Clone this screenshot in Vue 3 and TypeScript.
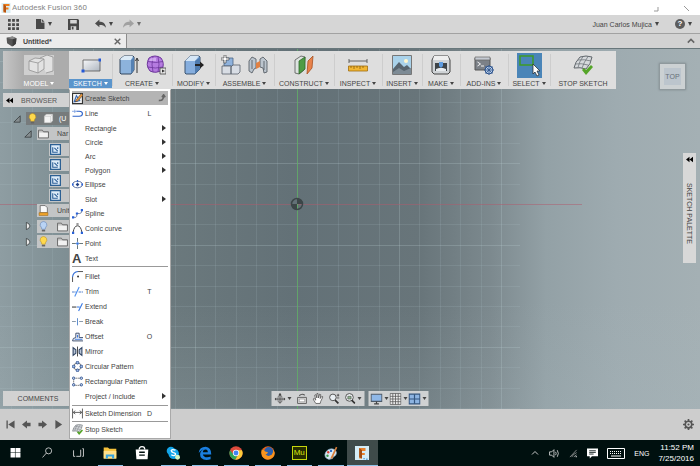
<script setup lang="ts">
interface Tool {
  label: string
  icons: string[]
  arrow: boolean
  state?: string
}

interface MenuItem {
  label: string
  icon?: string
  key?: string
  sub?: boolean
  active?: boolean
}

interface TreeRow {
  level: number
  icons: string[]
  toggle?: string
  text?: string
  root?: boolean
}

const icons: Record<string, string> = {
  // title and quick access
  fusion: '<path d="M1 0h18v20H1z" fill="#d9edf3"/><path d="M5 2h12v4H10v3h5v4h-5v6H5z" fill="#ef7d1a"/><path d="M5 2l5 4v13l-5-2z" fill="#b65312"/>',
  apps: '<g fill="#484848"><path d="M0 0h5v5H0zM7.500 0h5v5h-5zM15 0h5v5h-5zM0 7.500h5v5H0zM7.500 7.500h5v5h-5zM15 7.500h5v5h-5zM0 15h5v5H0zM7.500 15h5v5h-5zM15 15h5v5h-5z"/></g>',
  file: '<path d="M2 0h10v7h7v13H2z" fill="#484848"/><path d="M13.500 0L19 5.500h-5.500z" fill="#484848"/>',
  save: '<path d="M0 0h18l2 2v18H0z" fill="#484848"/><path d="M4 2h12v6H4zM5 13h10v7H5z" fill="#d6d6d6"/><path d="M7 14h3v5H7z" fill="#484848"/>',
  undo: '<path d="M0 8l8-7v4c7 0 11 3 12 11-3-4-6-5-12-5v4z" fill="#4c4c4c"/>',
  redo: '<path d="M20 8l-8-7v4C5 5 1 8 0 16c3-4 6-5 12-5v4z" fill="#8b8b8b"/>',
  cube: '<path d="M1 3l11-2 7 3-1 10-7 5-9-6z" fill="#555"/><path d="M1 3l11 3 7-2-7-3z" fill="#8a8a8a"/><path d="M12 6v13l6-5 1-10z" fill="#3c3c3c"/>',
  // ribbon
  model: '<path d="M0 0h30v20H0z" fill="#cfcfcf"/><g fill="#e2e2e2" stroke="#929292" stroke-width=".8"><path d="M16 3l7-3 6 2v14l-7 2"/><path d="M5 6l6-3 9 1v10l-6 4-9-3z"/><path d="M5 6l9 2 6-4M14 8v10" fill="none"/></g>',
  rect: '<defs><linearGradient id="rg" x2="1" y2="1"><stop stop-color="#f6f7f9"/><stop offset="1" stop-color="#aeb6c0"/></linearGradient></defs><path d="M2 5h17v11H2z" fill="url(#rg)" stroke="#555" stroke-width=".8"/><path d="M17.500 3.500h3v3h-3zM.500 14.500h3v3h-3z" fill="#2358d8"/>',
  extrude: '<path d="M1 4l4-3h9l1 1v13l-3 4H2l-1-1z" fill="#8db3dc" stroke="#33475e"/><path d="M1 4l4-3h9l-2 4H2z" fill="#dcebf7"/><path d="M12 5l3-3v13l-3 4z" fill="#5581b3"/><path d="M18 18V4M16.500 6L18 3l1.500 3" fill="none" stroke="#333"/>',
  form: '<path d="M3 3q6-4 12 0 4 5 1 12-6 4-12 1-5-6-1-13z" fill="#b57be0" stroke="#6d369c"/><path d="M7 1.500q-2 8 0 15.500M12 1.500q2 8 0 15.500M2 6.500q8 2 15 0M1.500 12q8 2 15.500 0" fill="none" stroke="#6d369c" stroke-width=".8"/><path d="M4 4q3-2 6-1v3H3z" fill="#dcbcf5" opacity=".7"/><path d="M14 13h6v6h-6z" fill="#e4e4e4" stroke="#444" stroke-width=".8"/><path d="M16 14.500l3 1.500-3 1.500z" fill="#333"/>',
  modify: '<path d="M1 6l5-5h9l1 1v12l-5 5H2l-1-1z" fill="#86aede" stroke="#3a536f"/><path d="M1 6l5-5h9l-4 5z" fill="#d5e6f6"/><path d="M11 6l5-4v12l-5 5z" fill="#4f7cb0"/><path d="M11 9h5V6.500l4 3.500-4 3.500V11h-5z" fill="#222"/>',
  component: '<path d="M3 5l2-2h7v8H3z" fill="#8fb2dc" stroke="#4d6484" stroke-width=".8"/><g fill="#d8dde4" stroke="#59606a" stroke-width=".8"><path d="M1 11h9v8H1zM10 12l2-2h7v7l-2 2h-7z"/></g><path d="M3 0h2v3h3v2H5v3H3V5H0V3h3z" fill="#fff" stroke="#333" stroke-width=".6"/>',
  joint: '<g fill="#bcc5ce" stroke="#4d545c" stroke-width=".8"><path d="M1 6l3-4 4 2v9l-2 1-2 4-3-2zM12 4l3-2 4 4v11l-3 1-1-5-3-1z"/><path d="M4 5v9M16 6v9" fill="none"/></g><path d="M8 8l4-2v6l-4 2z" fill="#e08042"/>',
  plane: '<path d="M1 5l6-4 4 1-1 13-5 4-4-1z" fill="#dde3e0" stroke="#555" stroke-width=".8"/><path d="M5 6l6-4v12l-6 5z" fill="#4f9c45" stroke="#2f6a2a" stroke-width=".8"/><path d="M14 6l5-5-1 12-5 6z" fill="#e8824b" stroke="#a7501f" stroke-width=".8"/>',
  ruler: '<path d="M1 6h18M1 4v4M19 4v4" stroke="#555" fill="none" stroke-width=".9"/><path d="M.500 11h19v5H.500z" fill="#f2b632" stroke="#a06d10" stroke-width=".8"/><path d="M3 11v2M6 11v3M9 11v2M12 11v3M15 11v2" stroke="#7c5307" stroke-width=".7"/>',
  image: '<path d="M.500.500h19v19H.500z" fill="#a9d2ea" stroke="#777"/><circle cx="14" cy="6" r="2" fill="#fff7ce"/><path d="M1 14l6-7 5 5 3-2 4 4v5H1z" fill="#57646e"/><path d="M1 17l6-4 5 3 7-3v6H1z" fill="#7d8b95"/>',
  printer: '<path d="M3 1h14l2 4v12l-2 2H3l-2-2V5z" fill="#cfd3d6" stroke="#444"/><path d="M4 8h12v8H4z" fill="#3e4449"/><path d="M3 1h14l1 4H2z" fill="#eee"/><path d="M8 7h4v4l-2 2-2-2z" fill="#5d9be0"/><path d="M5 14l3-1h4l3 1v2H5z" fill="#e7ebee"/>',
  script: '<path d="M1 3h15v12H1z" fill="#7c8188" stroke="#555"/><path d="M1 2h15v3H1z" fill="#c5cad2" stroke="#666" stroke-width=".7"/><path d="M3.500 7l3 2-3 2M7 11h3" fill="none" stroke="#fff" stroke-width=".9"/><circle cx="15" cy="15" r="4" fill="#b8cde9" stroke="#2d538c"/><path d="M15 10v10M10 15h10M11.500 11.500l7 7M18.500 11.500l-7 7" stroke="#2d538c" stroke-width=".8"/>',
  select: '<path d="M0 0h25v25H0z" fill="#4a85b8"/><path d="M3 3h13v9H3z" fill="none" stroke="#3f9a26" stroke-width="1.500"/><path d="M16 11l7 7h-3l2 4-2 1-2-4-2 2z" fill="#fff" stroke="#222" stroke-width=".7"/>',
  finish: '<path d="M7 2q6-2 12 0-1 7-6 12-6-2-12-1 1-6 6-11z" fill="#d6d9dc" stroke="#60666b"/><path d="M10 1.500Q6 7 5 12.500M15 1.500Q11 7 9 13M5 5q6-1 13 1M2 9q6-1 13 1" fill="none" stroke="#70767b" stroke-width=".8"/><path d="M9 15l2-2 2 2 5-5 2 2-7 8z" fill="#55a528"/>',
  // menu
  pencilbox: '<path d="M1 1h18v18H1z" fill="#f3f3f3" stroke="#333" stroke-width="2"/><path d="M4 16L8 5l6 9z" fill="none" stroke="#3569b8" stroke-width="2"/><path d="M7 13L17 1l3 3-10 11-4 1z" fill="#e9963a" stroke="#333"/>',
  line: '<path d="M1 15h12q6 0 6-4.500T13 6H8" fill="none" stroke="#2d62c9" stroke-width="2"/><path d="M0 6h8M5 3v6" stroke="#7a9ee0" stroke-width="1.500"/>',
  ellipse: '<ellipse cx="10" cy="10" rx="9" ry="6" fill="none" stroke="#5a6f9f" stroke-width="1.800"/><path d="M10 2v3M10 7v6M7 10h6" stroke="#2358c8" stroke-width="2"/><circle cx="10" cy="10" r="2.500" fill="#27417b"/><path d="M0 8h3v4H0zM17 8h3v4h-3z" fill="#2861d8"/>',
  spline: '<path d="M2 17h5q2 0 2-7h5q4 0 4-6" fill="none" stroke="#66799e" stroke-width="1.600"/><path d="M0 15h4v4H0zM16 2h4v4h-4zM7 8h4v4H7z" fill="#2861d8"/>',
  conic: '<path d="M2 17Q4 5 10 5t8 12" fill="none" stroke="#444" stroke-width="1.800"/><path d="M8 0h4v4H8z" fill="#999"/><path d="M0 16h4v4H0zM16 16h4v4h-4z" fill="#2861d8"/>',
  point: '<path d="M0 10h7M13 10h7M10 0v7M10 13v7" stroke="#566" stroke-width="1.600"/><circle cx="10" cy="10" r="2.500" fill="#3a78e0"/>',
  fillet: '<path d="M1 11Q2 2 11 1" fill="none" stroke="#2f6bd6" stroke-width="2"/><path d="M11 1h9M1 11v9" stroke="#555" stroke-width="1.800"/><circle cx="11" cy="10" r="1.800" fill="#333"/>',
  trim: '<path d="M0 11h8M12 11h8" stroke="#5684cf" stroke-width="2" stroke-dasharray="5 1"/><path d="M5 19L13 2" stroke="#4c8ff0" stroke-width="2"/>',
  extend: '<path d="M0 11h8" stroke="#444" stroke-width="2"/><path d="M9 11h5M12 18L19 4" stroke="#3778e2" stroke-width="2"/>',
  break: '<path d="M0 10h7M13 10h7" stroke="#8b9bab" stroke-width="1.800"/><path d="M10 4v13" stroke="#5d8ece" stroke-width="1.800"/>',
  offset: '<path d="M7 12V4h6v8h7M7 12q-6 0-6 6h19" fill="none" stroke="#405070" stroke-width="1.800"/><path d="M5 15h14M10 7v5" stroke="#3a76da" stroke-width="1.800"/>',
  mirror: '<path d="M2 3v14l5-4V7zM18 3v14l-5-4V7z" fill="#bac6d7" stroke="#334766" stroke-width="2"/><path d="M10 1v18" stroke="#333" stroke-width="1.600"/>',
  circpat: '<circle cx="10" cy="10" r="6.500" fill="none" stroke="#666" stroke-width="1.500"/><g fill="#9fb9e6" stroke="#244a8c" stroke-width="1.500"><circle cx="10" cy="3" r="2.500"/><circle cx="3" cy="10" r="2.500"/><circle cx="17" cy="10" r="2.500"/><circle cx="10" cy="17" r="2.500"/></g>',
  rectpat: '<path d="M3 4h14M3 4v13h14" fill="none" stroke="#666" stroke-width="1.500" stroke-dasharray="3 1"/><g fill="#cddaf0" stroke="#244a8c" stroke-width="1.500"><circle cx="3" cy="4" r="2.200"/><circle cx="17" cy="4" r="2.200"/><circle cx="3" cy="16" r="2.200"/><circle cx="17" cy="16" r="2.200"/></g>',
  dimension: '<path d="M1 1v18M19 1v18M3 8h14M6 5L2 8l4 3M14 5l4 3-4 3" fill="none" stroke="#444" stroke-width="1.500"/>',
  // browser
  bulb: '<path d="M10 1a6 6 0 0 1 4 10.500L13 15H7l-1-3.500A6 6 0 0 1 10 1z" fill="#ffd94d" stroke="#b98d17"/><path d="M7 16h6v3H7z" fill="#666"/>',
  bulboff: '<path d="M10 1a6 6 0 0 1 4 10.500L13 15H7l-1-3.500A6 6 0 0 1 10 1z" fill="#b9d3f5" stroke="#5c7db2"/><path d="M7 16h6v3H7z" fill="#666"/>',
  body: '<path d="M2 6l4-4h12v12l-4 4H2z" fill="#f4f4f4" stroke="#8a8a8a"/><path d="M2 6h12v12M14 6l4-4" fill="none" stroke="#bbb"/>',
  folder: '<path d="M1 4h7l2 3h9v11H1z" fill="#f1f1f1" stroke="#555" stroke-width="1.500"/><path d="M1 7h18" stroke="#777"/>',
  view: '<path d="M1 1h18v18H1z" fill="#dcebf8" stroke="#2c6093" stroke-width="2.500"/><path d="M5 6v9h9M8 7l6 6M14 6v3" fill="none" stroke="#2c5f97" stroke-width="2"/>',
  units: '<path d="M4 1h9l4 4v9H4z" fill="#fafafa" stroke="#666" stroke-width="1.500"/><path d="M2 14h16v5H2z" fill="#f0a52c" stroke="#9d6410"/>',
  open: '<path d="M18 2v16H2z" fill="#858d90" stroke="#2f3335" stroke-width="1.800"/>',
  shut: '<path d="M6 1q8 3 9 9-1 6-9 9z" fill="#e8e8e8" stroke="#2f3335" stroke-width="1.800"/>',
  // navigation
  orbit: '<path d="M10 1v18M1 11h18" stroke="#444" stroke-width="1.600"/><ellipse cx="10" cy="11" rx="4" ry="7" fill="none" stroke="#555" stroke-width="1.300"/><path d="M7 4l3-4 3 4zM17 8l3 3-3 3zM3 8l-3 3 3 3z" fill="#444"/>',
  look: '<path d="M2 8h16v11H2z" fill="#ddd" stroke="#555" stroke-width="1.600"/><path d="M5 11h10v5H5z" fill="#fff" stroke="#777"/><path d="M5 5q5-5 10-1" fill="none" stroke="#555" stroke-width="2"/>',
  hand: '<path d="M6 19L1 11l2-1 3 3-2-9 2-1 2 6V1h2l1 8 2-7 2 1-1 7 3-4 2 1-4 8-1 4z" fill="#fff" stroke="#444" stroke-width="1.300"/>',
  zoomer: '<circle cx="8" cy="8" r="6" fill="#e9eff3" stroke="#555" stroke-width="1.800"/><path d="M12 13l6 6" stroke="#333" stroke-width="3"/><path d="M15 4h5M17.500 1.500v5M15 9h5" stroke="#333" stroke-width="1.300"/>',
  fit: '<circle cx="9" cy="8" r="7" fill="#eef2f4" stroke="#555" stroke-width="1.800"/><path d="M6 6h6v5H6z" fill="#8db58d" stroke="#444"/><path d="M13 13l6 6" stroke="#333" stroke-width="3"/>',
  monitor: '<path d="M1 2h18v12H1z" fill="#8fb8e8" stroke="#4d5a68" stroke-width="1.800"/><path d="M6 18h8M10 14v4" stroke="#444" stroke-width="2"/>',
  grid: '<path d="M1 1h18v18H1z" fill="#f2f2f2"/><path d="M1 1h18v18H1zM5.500 1v18M10 1v18M14.500 1v18M1 5.500h18M1 10h18M1 14.500h18" fill="none" stroke="#555" stroke-width="1.300"/>',
  panes: '<path d="M1 2h18v16H1z" fill="#8db4e2" stroke="#33557f" stroke-width="2"/><path d="M10 2v16M1 10h18" stroke="#33557f" stroke-width="2"/>',
  // timeline
  first: '<path d="M1 1h3v18H1zM19 1v18L5 10z" fill="#555"/>',
  prev: '<path d="M0 10L11 1v5h8v8h-8v5z" fill="#555"/>',
  next: '<path d="M20 10L9 1v5H1v8h8v5z" fill="#555"/>',
  play: '<path d="M3 0v20l15-10z" fill="#555"/>',
  gear: '<circle cx="10" cy="10" r="6" fill="none" stroke="#555" stroke-width="3"/><circle cx="10" cy="10" r="2" fill="#555"/><path d="M10 0v4M10 16v4M0 10h4M16 10h4M3 3l3 3M14 14l3 3M17 3l-3 3M6 14l-3 3" stroke="#555" stroke-width="3"/>',
  // taskbar
  windows: '<path d="M1 2h8v8H1zM10 2h9v8h-9zM1 11h8v8H1zM10 11h9v8h-9z" fill="#fff"/>',
  search: '<circle cx="12" cy="7" r="5.500" fill="none" stroke="#ddd" stroke-width="1.500"/><path d="M8 11l-7 8" stroke="#ddd" stroke-width="1.500"/>',
  taskview: '<path d="M1 6v11h3M6 17h8V5M17 3h2v14h-2" fill="none" stroke="#ddd" stroke-width="1.600"/>',
  explorer: '<path d="M1 2h6l2 2h10v14H1z" fill="#f5c33c"/><path d="M1 7h18v11H1z" fill="#ffe08a"/><path d="M4 12h12v6h-3v-3H7v3H4z" fill="#35a3e0"/>',
  store: '<path d="M6 5q0-4 4-4t4 4" fill="none" stroke="#fff" stroke-width="1.800"/><path d="M1 5h18l-1 14H2z" fill="#fff"/><path d="M6 8h8v2H6zM6 12h8v2H6z" fill="#00100f"/>',
  skype: '<circle cx="7" cy="7" r="6" fill="#12a5e8"/><circle cx="11" cy="11" r="7.500" fill="#12a5e8"/><path d="M13.500 6q-5-2-6 .500 0 2 3 3 4 1 3 3-2 2.500-6 0" fill="none" stroke="#fff" stroke-width="2"/><circle cx="16.500" cy="16" r="3.500" fill="#d7f5c2"/>',
  edge: '<path d="M1 10Q2 1 11 1q8 1 8 11H7q1 4 6 4 3 0 5-1v4q-3 1-6 1-9-1-9-8 0-5 5-7-3 0-7 5zM7 9h7q0-4-3-4-4 0-4 4z" fill="#1a7fe0"/>',
  chrome: '<circle cx="10" cy="10" r="9.500" fill="#dd4b3c"/><path d="M1.500 6A9.500 9.500 0 0 0 9 19.500L13 12l-6 1z" fill="#2ea65a"/><path d="M9 19.500A9.500 9.500 0 0 0 18.500 6H10l3.500 6z" fill="#fccd3a"/><circle cx="10" cy="10" r="4.500" fill="#fff"/><circle cx="10" cy="10" r="3.500" fill="#4285f4"/>',
  firefox: '<circle cx="10" cy="10" r="9.500" fill="#e8641b"/><circle cx="11" cy="8" r="6.500" fill="#2a5fae"/><path d="M1 5q3 0 5 3l4 1q-2 4-4 2 3 5 9 2 3-3 2-8 5 6 0 11-7 6-13 1-5-4-3-12z" fill="#f7941e"/>',
  paint: '<path d="M3 8q5-6 12-3 5 4 1 9-3 1-4 4-6 3-10-2-2-4 1-8z" fill="#dcebf5" stroke="#7fa4be"/><circle cx="6" cy="9" r="1.700" fill="#d9423a"/><circle cx="5" cy="14" r="1.700" fill="#3b9b4c"/><circle cx="10" cy="7" r="1.700" fill="#3271c6"/><path d="M9 18l8-17 2 1-7 16z" fill="#d87f3b"/>',
  fusiontask: '<path d="M0 0h20v20H0z" fill="#d5edf6"/><path d="M6 3h9v4h-5v3h4v3h-4v5H6z" fill="#e8822e"/><path d="M6 3l4 3v12l-4-2z" fill="#a14d13"/><path d="M12 17h2v2h-2zM16 18h2v2h-2z" fill="#4fa1dc"/>',
  up: '<path d="M4 13l6-6 6 6" fill="none" stroke="#ddd" stroke-width="1.800"/>',
  sound: '<path d="M1 7h4l4-4v14l-4-4H1z" fill="none" stroke="#ddd" stroke-width="1.500"/><path d="M12 7q2 3 0 6M15 4q4 6 0 12" fill="none" stroke="#ddd" stroke-width="1.500"/>',
  wifi: '<path d="M2 18L17 2M6 18q2-6 11-10M11 18q1-3 6-5" fill="none" stroke="#bbb" stroke-width="1.500"/><circle cx="16" cy="17" r="1.500" fill="#eee"/>',
  note: '<path d="M0 1h20v14H9l-4 4v-4H0z" fill="#fff"/><path d="M4 5h12M4 8h12M4 11h8" stroke="#00100f" stroke-width="1.500"/>',
}

const tools: Tool[] = [
  { label: 'MODEL', icons: ['model'], arrow: true, state: 'workspace' },
  { label: 'SKETCH', icons: ['rect'], arrow: true, state: 'opened' },
  { label: 'CREATE', icons: ['extrude', 'form'], arrow: true },
  { label: 'MODIFY', icons: ['modify'], arrow: true },
  { label: 'ASSEMBLE', icons: ['component', 'joint'], arrow: true },
  { label: 'CONSTRUCT', icons: ['plane'], arrow: true },
  { label: 'INSPECT', icons: ['ruler'], arrow: true },
  { label: 'INSERT', icons: ['image'], arrow: true },
  { label: 'MAKE', icons: ['printer'], arrow: true },
  { label: 'ADD-INS', icons: ['script'], arrow: true },
  { label: 'SELECT', icons: ['select'], arrow: true },
  { label: 'STOP SKETCH', icons: ['finish'], arrow: false },
]

const menu: MenuItem[][] = [
  [{ label: 'Create Sketch', icon: 'pencilbox', active: true }],
  [
    { label: 'Line', icon: 'line', key: 'L' },
    { label: 'Rectangle', sub: true },
    { label: 'Circle', sub: true },
    { label: 'Arc', sub: true },
    { label: 'Polygon', sub: true },
    { label: 'Ellipse', icon: 'ellipse' },
    { label: 'Slot', sub: true },
    { label: 'Spline', icon: 'spline' },
    { label: 'Conic curve', icon: 'conic' },
    { label: 'Point', icon: 'point' },
    { label: 'Text', icon: 'letter' },
  ],
  [
    { label: 'Fillet', icon: 'fillet' },
    { label: 'Trim', icon: 'trim', key: 'T' },
    { label: 'Extend', icon: 'extend' },
    { label: 'Break', icon: 'break' },
    { label: 'Offset', icon: 'offset', key: 'O' },
    { label: 'Mirror', icon: 'mirror' },
    { label: 'Circular Pattern', icon: 'circpat' },
    { label: 'Rectangular Pattern', icon: 'rectpat' },
    { label: 'Project / Include', sub: true },
  ],
  [{ label: 'Sketch Dimension', icon: 'dimension', key: 'D' }],
  [{ label: 'Stop Sketch', icon: 'finish' }],
]

const tree: TreeRow[] = [
  { level: 1, toggle: 'open', icons: ['bulb', 'body'], text: '(U', root: true },
  { level: 2, toggle: 'open', icons: ['folder'], text: 'Nar' },
  { level: 3, icons: ['view'] },
  { level: 3, icons: ['view'] },
  { level: 3, icons: ['view'] },
  { level: 3, icons: ['view'] },
  { level: 2, icons: ['units'], text: 'Unit' },
  { level: 2, toggle: 'shut', icons: ['bulboff', 'folder'] },
  { level: 2, toggle: 'shut', icons: ['bulb', 'folder'] },
]

const navView = [
  { icon: 'orbit', arrow: true },
  { icon: 'look', arrow: false },
  { icon: 'hand', arrow: false },
  { icon: 'zoomer', arrow: false },
  { icon: 'fit', arrow: true },
]
const navDisplay = ['monitor', 'grid', 'panes']
const playback = ['first', 'prev', 'next', 'play']

const taskApps = [
  { icon: 'windows', open: false },
  { icon: 'search', open: false },
  { icon: 'taskview', open: false },
  { icon: 'explorer', open: true },
  { icon: 'store', open: false },
  { icon: 'skype', open: true },
  { icon: 'edge', open: true },
  { icon: 'chrome', open: true },
  { icon: 'firefox', open: true },
  { icon: 'muse', open: true },
  { icon: 'paint', open: true },
  { icon: 'fusiontask', open: true },
]

// Sketch grid, measured from the origin marker
const origin = { x: 297, y: 155 }
const step = 20.4
const columns = Array.from({ length: 25 }, (_, i) => i - 14)
  .filter((n) => n !== 0)
  .map((n) => ({ pos: Math.round(origin.x + n * step) + 0.5, major: n % 5 === 0 }))
const rows = Array.from({ length: 40 }, (_, i) => i - 7)
  .filter((n) => n !== 0)
  .map((n) => ({ pos: Math.round(origin.y + n * step) + 0.5, major: Math.abs(n % 5) === 2 }))
</script>

<template>
  <div class="app">
    <header class="titlebar">
      <svg class="i10" viewBox="0 0 20 20" v-html="icons.fusion"></svg>
      <span class="title">Autodesk Fusion 360</span>
      <svg class="winbuttons" viewBox="0 0 40 10"><path d="M1 8h4V4" /><path d="M31 3l5 5" /></svg>
    </header>

    <div class="quickbar">
      <button class="plain" aria-label="Data panel"><svg class="i11" viewBox="0 0 20 20" v-html="icons.apps"></svg></button>
      <button class="plain" aria-label="File"><svg class="i10" viewBox="0 0 20 20" v-html="icons.file"></svg><i class="caret"></i></button>
      <button class="plain" aria-label="Save"><svg class="i11" viewBox="0 0 20 20" v-html="icons.save"></svg></button>
      <div class="history">
        <button class="plain" aria-label="Undo"><svg class="i11" viewBox="0 0 20 20" v-html="icons.undo"></svg><i class="caret"></i></button>
        <button class="plain faded" aria-label="Redo"><svg class="i11" viewBox="0 0 20 20" v-html="icons.redo"></svg><i class="caret"></i></button>
      </div>
      <button class="plain user">Juan Carlos Mujica<i class="caret"></i></button>
      <button class="plain" aria-label="Help"><span class="help">?</span><i class="caret"></i></button>
    </div>

    <div class="tabs">
      <div class="tab">
        <svg class="i11" viewBox="0 0 20 20" v-html="icons.cube"></svg>
        <span>Untitled*</span>
        <button class="plain" aria-label="Close tab">
          <svg class="i7" viewBox="0 0 10 10"><path class="stroke" d="M1 1l8 8M9 1l-8 8" /></svg>
        </button>
      </div>
      <button class="plain collapse" aria-label="Collapse">
        <svg class="i8" viewBox="0 0 10 10"><path class="stroke" d="M1 7l4-4 4 4" /></svg>
      </button>
    </div>

    <main class="viewport">
      <svg class="canvas">
        <line v-for="c in columns" :key="'c' + c.pos" :x1="c.pos" :x2="c.pos" y1="0" y2="100%" :class="{ major: c.major }" />
        <line v-for="r in rows" :key="'r' + r.pos" x1="0" x2="520" :y1="r.pos" :y2="r.pos" :class="{ major: r.major }" />
        <line class="axis-x" x1="0" x2="582" y1="155.5" y2="155.5" />
        <line class="axis-y" x1="297.5" x2="297.5" y1="0" y2="100%" />
        <circle class="ring" cx="297" cy="155" r="5.500" />
        <path class="wedge" d="M297 155V149.500A5.500 5.500 0 0 1 302.500 155zM297 155v5.500A5.500 5.500 0 0 1 291.500 155z" />
      </svg>

      <nav class="ribbon">
        <div v-for="tool in tools" :key="tool.label" class="group" :class="tool.state">
          <button class="tool">
            <span class="pics">
              <svg
                v-for="name in tool.icons"
                :key="name"
                :class="name"
                :viewBox="name === 'model' ? '0 0 30 20' : name === 'select' ? '0 0 25 25' : '0 0 20 20'"
                v-html="icons[name]"
              ></svg>
            </span>
            <span class="label">{{ tool.label }}<i v-if="tool.arrow" class="caret small"></i></span>
          </button>
          <div v-if="tool.state === 'opened'" class="menu">
            <ul v-for="(section, s) in menu" :key="s">
              <li v-for="item in section" :key="item.label">
                <button class="item" :class="{ active: item.active, sub: item.sub }">
                  <span class="slot">
                    <b v-if="item.icon === 'letter'" class="letter">A</b>
                    <svg v-else-if="item.icon" class="i11" viewBox="0 0 20 20" v-html="icons[item.icon]"></svg>
                  </span>
                  <span class="name">{{ item.label }}</span>
                  <kbd v-if="item.key">{{ item.key }}</kbd>
                  <i v-if="item.sub" class="right"></i>
                  <svg v-if="item.active" class="i8" viewBox="0 0 10 10"><path class="stroke" d="M1 8q6 1 6-6M5 4l2-3 2 3" /></svg>
                </button>
              </li>
            </ul>
          </div>
        </div>
      </nav>

      <section class="browser">
        <h2><svg class="i7" viewBox="0 0 10 8"><path d="M5 0v8L0 4zM10 0v8L5 4z" /></svg>BROWSER</h2>
        <ul class="tree">
          <li v-for="(row, i) in tree" :key="i" :class="['level' + row.level, { root: row.root }]">
            <span class="toggle"><svg v-if="row.toggle" class="i8" viewBox="0 0 20 20" v-html="icons[row.toggle]"></svg></span>
            <span class="node">
              <svg v-for="name in row.icons" :key="name" class="i11" viewBox="0 0 20 20" v-html="icons[name]"></svg>
              <span v-if="row.text">{{ row.text }}</span>
            </span>
          </li>
        </ul>
      </section>

      <div class="viewcube"><span>TOP</span></div>
      <button class="palette">
        <svg class="i7" viewBox="0 0 10 8"><path d="M5 0v8L0 4zM10 0v8L5 4z" /></svg>
        <span>SKETCH PALETTE</span>
      </button>

      <div class="footer">
        <button class="comments">COMMENTS</button>
        <div class="navbar">
          <div class="navset">
            <button v-for="n in navView" :key="n.icon" class="plain" :aria-label="n.icon">
              <svg class="i11" viewBox="0 0 20 20" v-html="icons[n.icon]"></svg><i v-if="n.arrow" class="caret small"></i>
            </button>
          </div>
          <div class="navset display">
            <button v-for="n in navDisplay" :key="n" class="plain" :aria-label="n">
              <svg class="i12" viewBox="0 0 20 20" v-html="icons[n]"></svg><i class="caret small"></i>
            </button>
          </div>
        </div>
      </div>
    </main>

    <div class="timeline">
      <button v-for="p in playback" :key="p" class="plain" :aria-label="p">
        <svg class="i9" viewBox="0 0 20 20" v-html="icons[p]"></svg>
      </button>
      <button class="plain settings" aria-label="Settings"><svg class="i11" viewBox="0 0 20 20" v-html="icons.gear"></svg></button>
    </div>

    <footer class="taskbar">
      <div class="apps">
        <button v-for="a in taskApps" :key="a.icon" :aria-label="a.icon" :class="{ open: a.open, current: a.icon === 'fusiontask' }">
          <span v-if="a.icon === 'muse'" class="muse">Mu</span>
          <svg v-else :class="['windows', 'search', 'taskview'].includes(a.icon) ? 'i11' : 'i14'" viewBox="0 0 20 20" v-html="icons[a.icon]"></svg>
        </button>
      </div>
      <div class="tray">
        <svg class="i10" viewBox="0 0 20 20" v-html="icons.up"></svg>
        <svg class="i11" viewBox="0 0 20 20" v-html="icons.sound"></svg>
        <svg class="i9" viewBox="0 0 20 20" v-html="icons.wifi"></svg>
        <svg class="i11" viewBox="0 0 20 20" v-html="icons.note"></svg>
        <svg class="keyboard" viewBox="0 0 18 11">
          <path class="frame" d="M.500.500h17v10H.500z" />
          <path class="keys" d="M3 3.500h12M3 5.500h12" />
          <path class="frame" d="M4 8h10" />
        </svg>
        <span>ENG</span>
        <time>11:52 PM<br />7/25/2016</time>
      </div>
    </footer>
  </div>
</template>

<style>
body {
  margin: 0;
}
</style>

<style scoped>
.app {
  display: flex;
  flex-direction: column;
  min-height: 100vh;
  font: 7px/9px 'Liberation Sans', Arial, sans-serif;
  color: #444;
  overflow: hidden;
}
button {
  font: inherit;
  color: inherit;
  border: 0;
  margin: 0;
  padding: 0;
  background: none;
}
ul {
  list-style: none;
  margin: 0;
  padding: 0;
}
svg {
  display: block;
  flex: none;
}
.i7 { width: 7px; height: 7px; }
.i8 { width: 8px; height: 8px; }
.i9 { width: 9px; height: 9px; }
.i10 { width: 10px; height: 10px; }
.i11 { width: 11px; height: 11px; }
.i12 { width: 12px; height: 12px; }
.i14 { width: 14px; height: 14px; }
.plain {
  display: flex;
  align-items: center;
  gap: 3px;
}
.stroke {
  fill: none;
  stroke: #666;
  stroke-width: 2;
}
.caret {
  flex: none;
  border: 2px solid transparent;
  border-top: 4px solid #444;
  border-bottom: 0;
}
.caret.small {
  border-top-width: 3px;
}

.titlebar {
  display: flex;
  align-items: center;
  height: 15px;
  padding: 0 7px 0 1px;
  gap: 1px;
  background: #fff;
  color: #888;
}
.title {
  font: 8px/10px Roboto, 'Liberation Sans', sans-serif;
}
.winbuttons {
  width: 40px;
  height: 10px;
  margin-left: auto;
  fill: none;
  stroke: #999;
}
.quickbar {
  display: flex;
  align-items: center;
  gap: 16px;
  height: 18px;
  padding: 0 8px;
  background: #d6d6d6;
  border-bottom: 1px solid #a2a2a2;
}
.history {
  display: flex;
  gap: 10px;
}
.faded {
  opacity: 0.7;
}
.user {
  margin-left: auto;
}
.help {
  width: 10px;
  height: 10px;
  border-radius: 50%;
  background: #5c5c5c;
  color: #fff;
  font: bold 8px/10px 'Liberation Sans', Arial, sans-serif;
}
.tabs {
  display: flex;
  height: 14px;
  background: #d2d2d2;
}
.tab {
  display: flex;
  align-items: center;
  gap: 6px;
  width: 115px;
  padding: 0 5px 0 6px;
  background: #ececec;
  border-right: 1px solid #8c8c8c;
  font-weight: bold;
}
.tab .plain {
  margin-left: auto;
}
.collapse {
  margin-left: auto;
  margin-right: 5px;
}

.viewport {
  position: relative;
  flex: 1;
  display: flex;
  flex-direction: column;
  padding: 2px 3px 3px;
  border-top: 1px solid #68777b;
  background:
    linear-gradient(to bottom, rgba(170, 185, 190, 0) 70%, rgba(170, 185, 190, 0.18)),
    linear-gradient(to right, #8e9da2, #819196 8%, #6b797d 24%, #637177 42%, #68757a 60%, #7c898e 70%, #93a1a6 78%, #9eabb0 88%, #a4b0b4);
}
.canvas {
  position: absolute;
  inset: 0;
  width: 100%;
  height: 100%;
}
.canvas line {
  stroke: #b8cdd2;
  stroke-opacity: 0.14;
}
.canvas line.major {
  stroke-opacity: 0.26;
}
.canvas line.axis-x {
  stroke: #b05a6c;
  stroke-opacity: 0.5;
}
.canvas line.axis-y {
  stroke: #62b066;
  stroke-opacity: 0.8;
}
.ring {
  fill: none;
  stroke: #3c4648;
  stroke-width: 1.5;
}
.wedge {
  fill: #3c4648;
}

.ribbon {
  position: relative;
  z-index: 2;
  display: grid;
  grid-template-columns: 66px 43px 60px 43px 59px 60px 48px 40px 38px 48px 42px 66px;
  align-self: flex-start;
  height: 38px;
  background: #dedede;
}
.group {
  position: relative;
  display: flex;
}
.group + .group + .group::before {
  content: '';
  position: absolute;
  left: 0;
  top: 3px;
  bottom: 3px;
  border-left: 1px solid #cdcdcd;
}
.tool {
  flex: 1;
  display: flex;
  flex-direction: column;
  align-items: center;
}
.pics {
  display: flex;
  align-items: center;
  justify-content: center;
  gap: 7px;
  height: 28px;
}
.pics svg {
  width: 20px;
  height: 20px;
}
.pics .model {
  width: 30px;
}
.pics .select {
  width: 25px;
  height: 25px;
}
.label {
  display: flex;
  align-items: center;
  justify-content: center;
  gap: 2px;
  align-self: stretch;
  height: 9px;
  white-space: nowrap;
}
.workspace {
  background: linear-gradient(to right, #c6c6c6, #acacac 30%, #acacac);
  color: #fff;
}
.workspace .tool {
  padding-left: 6px;
}
.workspace .caret,
.opened .tool .caret {
  border-top-color: #fff;
}
.opened .label {
  background: #5b95cc;
  color: #fff;
}

.menu {
  position: absolute;
  top: 38px;
  left: 0;
  width: 100px;
  padding: 1px 0;
  background: #fff;
  border: 1px solid #a9a9a9;
  border-top-color: #fff;
}
.menu ul {
  margin: 0 2px;
}
.menu ul:nth-child(2) {
  padding-top: 1px;
}
.menu ul:nth-child(3) {
  padding: 2px 0;
  border-top: 1px solid #999;
}
.menu ul:nth-child(n + 4) {
  border-top: 1px solid #999;
}
.item {
  display: flex;
  align-items: center;
  width: 100%;
  height: 15px;
  text-align: left;
}
.item.sub {
  height: 14px;
}
.item.active {
  height: 14px;
  padding-right: 2px;
  background: #b4b4b4;
}
.slot {
  display: flex;
  width: 13px;
}
.letter {
  font-size: 13px;
  line-height: 13px;
}
.name {
  flex: 1;
  white-space: nowrap;
}
.item kbd {
  width: 7px;
  margin-right: 15px;
  font: inherit;
  text-align: center;
}
.right {
  margin-right: 2px;
  border: 3px solid transparent;
  border-left: 4px solid #333;
  border-right: 0;
}

.browser {
  position: relative;
  width: 66px;
  margin-top: 4px;
}
.browser h2 {
  display: flex;
  align-items: center;
  gap: 8px;
  height: 14px;
  margin: 0 0 5px;
  padding-left: 3px;
  background: #d2d2d2;
  font: inherit;
  color: #555;
}
.tree {
  display: flex;
  flex-direction: column;
  justify-content: space-between;
  height: 136px;
}
.tree li {
  display: flex;
  height: 13px;
}
.level1 { padding-left: 10px; }
.level2 { padding-left: 21px; }
.level3 { padding-left: 33px; }
.toggle {
  flex: none;
  display: flex;
  align-items: center;
  width: 13px;
}
.node {
  flex: 1;
  display: flex;
  align-items: center;
  gap: 6px;
  min-width: 0;
  padding-left: 1px;
  background: #c3c5c6;
  overflow: hidden;
}
.level2 .node {
  gap: 8px;
}
.root .node {
  background: #777b7c;
  color: #fff;
  gap: 5px;
}

.viewcube {
  position: absolute;
  top: 14px;
  right: 14px;
  padding: 4px;
  background: #ccd1d3;
  border: 1px solid #8f999d;
  box-shadow: 0 0 2px #7c888d;
}
.viewcube span {
  display: block;
  width: 17px;
  background: #bcc5cd;
  color: #687078;
  line-height: 17px;
  text-align: center;
}
.palette {
  position: absolute;
  top: 104px;
  right: 4px;
  display: flex;
  flex-direction: column;
  align-items: center;
  width: 13px;
  height: 110px;
  padding-top: 3px;
  background: #d8d8d8;
}
.palette span {
  flex: 1;
  writing-mode: vertical-rl;
  text-align: center;
}

.footer {
  position: relative;
  margin-top: auto;
}
.comments {
  display: block;
  width: 66px;
  height: 15px;
  padding-left: 4px;
  background: #d2d2d2;
}
.navbar {
  position: absolute;
  top: 0;
  left: 50%;
  transform: translateX(-50%);
  display: flex;
  gap: 4px;
}
.navset {
  display: flex;
  justify-content: space-between;
  width: 87px;
  height: 15px;
  padding: 0 3px;
  background: #cfd1d2;
}
.display {
  width: 56px;
  padding: 0 2px;
}
.navset .plain {
  gap: 2px;
}

.timeline {
  display: flex;
  align-items: center;
  gap: 7px;
  height: 31px;
  padding: 0 6px;
  background: #cdcdcd;
}
.settings {
  margin-left: auto;
}

.taskbar {
  display: flex;
  justify-content: space-between;
  height: 26px;
  background: #00100f;
  color: #fff;
}
.apps {
  display: flex;
  width: 54%;
}
.apps button {
  flex: 1;
  display: flex;
  align-items: center;
  justify-content: center;
  margin: 0 3px;
  border-bottom: 1px solid transparent;
}
.apps .open {
  border-bottom-color: #8fc4ea;
}
.apps .current {
  margin: 0;
  padding: 0 3px;
  background: #3f4b4a;
}
.muse {
  width: 13px;
  border: 1px solid #c5d60d;
  background: #262d00;
  color: #d6e60f;
  font-size: 8px;
  line-height: 12px;
}
.tray {
  display: flex;
  align-items: center;
  gap: 9px;
  padding-right: 6px;
}
.keyboard {
  width: 18px;
  height: 11px;
}
.frame {
  fill: none;
  stroke: #fff;
}
.keys {
  stroke: #fff;
  stroke-dasharray: 1 1;
}
.tray time {
  font-size: 8px;
  line-height: 11px;
  text-align: right;
}
</style>
